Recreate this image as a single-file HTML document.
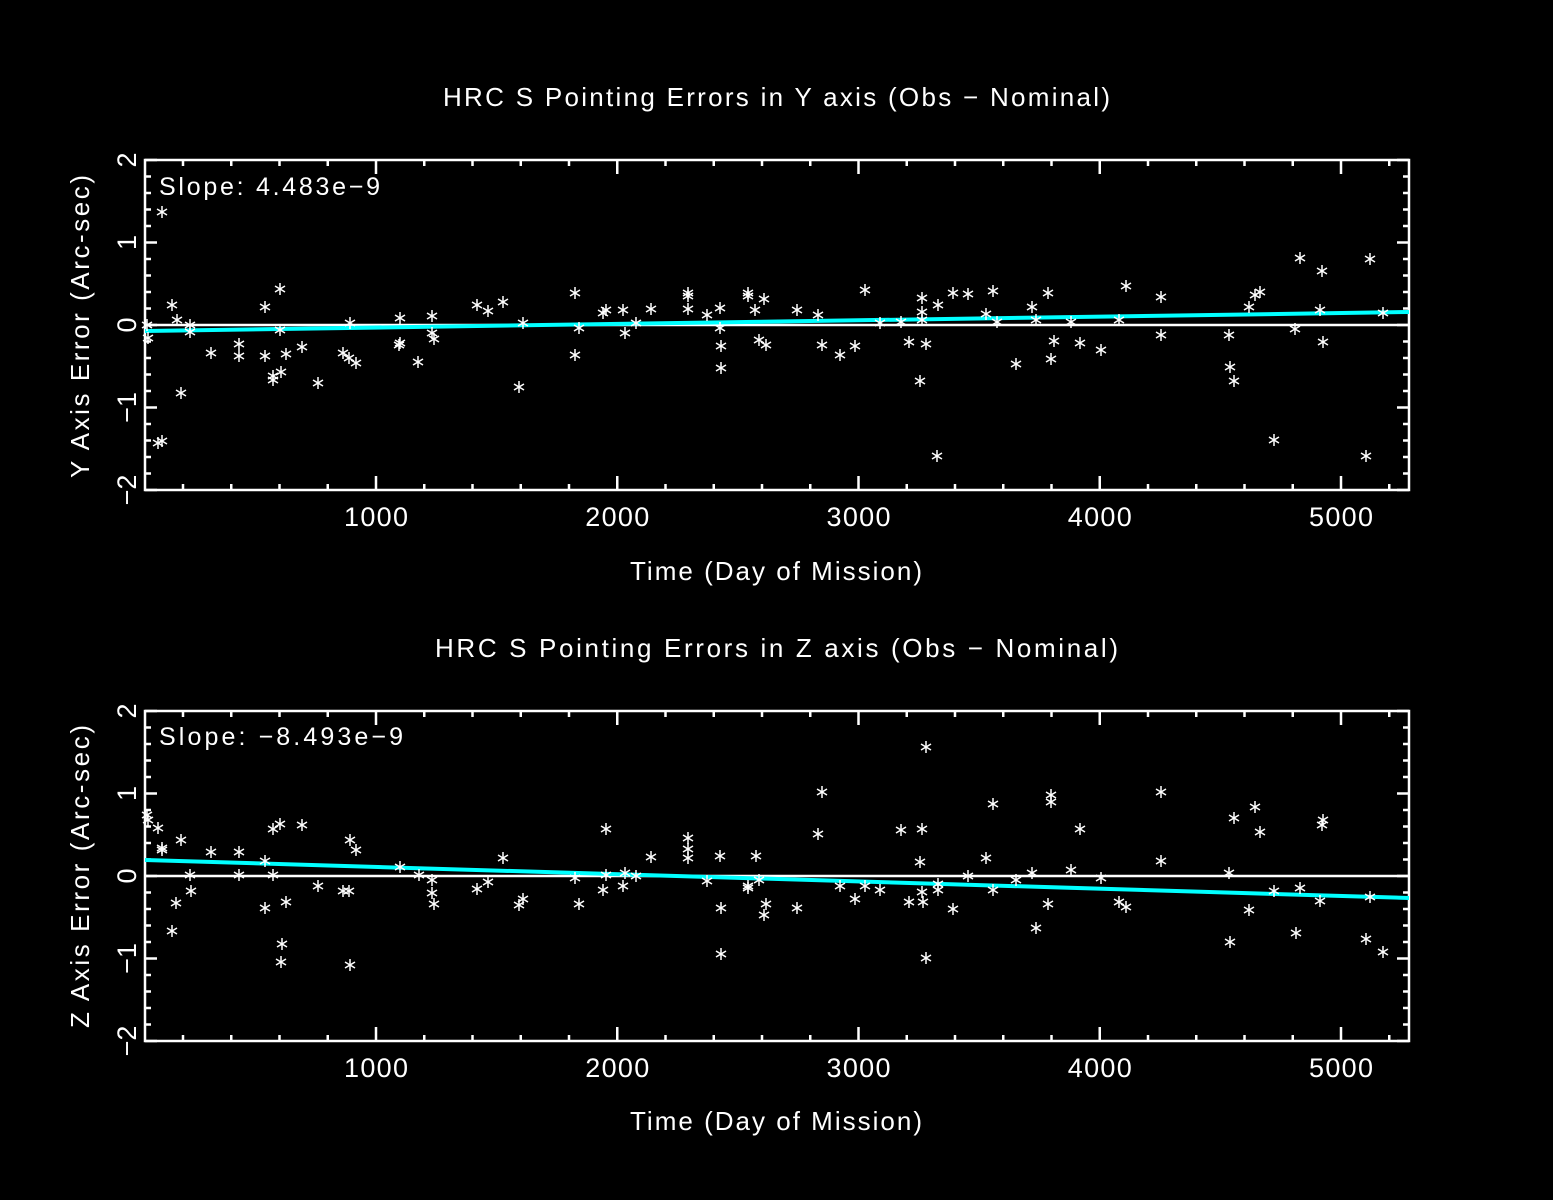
<!DOCTYPE html>
<html><head><meta charset="utf-8"><style>
html,body{margin:0;padding:0;background:#000;}
svg{display:block}
text{font-family:"Liberation Sans",sans-serif;fill:#fff}
</style></head><body>
<svg id="s" width="1553" height="1200" xmlns="http://www.w3.org/2000/svg">
<rect width="1553" height="1200" fill="#000"/>
<text x="443" y="106" font-size="26" textLength="667" lengthAdjust="spacing">HRC S Pointing Errors in Y axis (Obs − Nominal)</text>
<text x="435" y="657" font-size="26" textLength="683" lengthAdjust="spacing">HRC S Pointing Errors in  Z axis (Obs − Nominal)</text>
<text x="630" y="580" font-size="26" textLength="292" lengthAdjust="spacing">Time (Day of Mission)</text>
<text x="630" y="1130" font-size="26" textLength="292" lengthAdjust="spacing">Time (Day of Mission)</text>
<text transform="translate(89,478) rotate(-90)" font-size="26" textLength="303" lengthAdjust="spacing">Y Axis Error (Arc-sec)</text>
<text transform="translate(89,1028) rotate(-90)" font-size="26" textLength="303" lengthAdjust="spacing">Z Axis Error (Arc-sec)</text>
<text x="159" y="195" font-size="25" textLength="221" lengthAdjust="spacing">Slope:  4.483e−9</text>
<text x="159" y="745" font-size="25" textLength="244" lengthAdjust="spacing">Slope:  −8.493e−9</text>
<g id="g"></g>
</svg>
<script>
var g=document.getElementById('g'),h='';
function L(a,b,c,d,col,w){h+='<line x1="'+a+'" y1="'+b+'" x2="'+c+'" y2="'+d+'" stroke="'+(col||'#fff')+'" stroke-width="'+(w||2.5)+'"/>';}
function T(x,y,s,rot){h+=rot?'<text transform="translate('+x+','+y+') rotate(-90)" font-size="27" text-anchor="middle">'+s+'</text>':'<text x="'+x+'" y="'+y+'" font-size="27" text-anchor="middle" textLength="'+(s>=1000?64:0)+'" lengthAdjust="spacing">'+s+'</text>';}
function plot(top,bot,line,pts){
 var l=145,r=1409;
 h+='<rect x="'+l+'" y="'+top+'" width="'+(r-l)+'" height="'+(bot-top)+'" fill="none" stroke="#fff" stroke-width="2.5"/>';
 var zero=(top+bot)/2, u=(bot-top)/4;
 for(var d=200;d<=5200;d+=200){var x=134.75+d*0.24125;var big=d%1000==0;var len=big?14:6;L(x,top,x,top+len);L(x,bot,x,bot-len);if(big)T(x,bot+36,d);}
 for(var k=-10;k<=10;k++){var y=zero-k*u/5;var big=k%5==0;var len=big?12:6;L(l,y,l+len,y);L(r,y,r-len,y);if(big)T(136,y,k==0?'0':(k<0?'−':'')+Math.abs(k/5),true);}
 L(l,zero,r,zero,'#fff',2.5);
 L(l,line[0],r,line[1],'#00ffff',4);
 pts.forEach(function(p){var x=p[0],y=p[1];L(x,y-6,x,y+6,'#fff',1.5);L(x-5,y-3,x+5,y+3,'#fff',1.5);L(x-5,y+3,x+5,y-3,'#fff',1.5);});
}
plot(160,490,[331,312],[[147,325],[148,338],[162,212],[158,443],[162,441],[172,305],[177,320],[181,393],[190,325],[190,332],[211,353],[239,344],[239,356],[265,307],[265,356],[273,376],[273,380],[280,289],[280,330],[281,372],[286,354],[302,347],[318,383],[343,353],[349,358],[350,323],[356,363],[400,318],[400,343],[399,345],[418,362],[432,316],[432,333],[434,339],[477,305],[488,311],[503,302],[519,387],[523,323],[575,293],[575,355],[579,328],[603,313],[606,310],[623,310],[625,333],[636,323],[651,309],[688,293],[688,296],[688,309],[707,315],[720,308],[720,328],[721,346],[721,368],[748,293],[748,296],[755,310],[759,340],[764,299],[766,345],[797,310],[818,315],[822,345],[840,355],[855,346],[865,290],[880,323],[901,322],[909,342],[920,381],[922,298],[922,312],[922,320],[926,344],[937,456],[938,305],[953,293],[968,294],[986,314],[993,291],[997,322],[1016,364],[1032,307],[1036,320],[1048,293],[1051,359],[1054,341],[1071,322],[1080,343],[1101,350],[1119,320],[1126,286],[1161,297],[1161,335],[1229,335],[1230,367],[1234,381],[1249,307],[1255,295],[1260,292],[1274,440],[1295,329],[1300,258],[1320,310],[1322,271],[1323,342],[1366,456],[1370,259],[1383,313]]);
plot(711,1041,[860,898],[[147,815],[148,820],[158,828],[162,848],[162,850],[172,931],[176,903],[181,840],[190,875],[191,891],[211,852],[239,852],[239,875],[265,861],[265,908],[273,829],[273,875],[280,824],[282,944],[281,962],[286,902],[302,825],[318,886],[343,891],[349,891],[350,840],[356,850],[350,965],[400,867],[419,875],[432,880],[432,893],[434,904],[477,889],[488,882],[503,858],[519,905],[523,899],[575,878],[579,904],[603,890],[606,829],[606,875],[623,886],[625,873],[636,876],[651,857],[688,838],[688,849],[688,858],[707,881],[720,856],[721,908],[721,954],[748,886],[748,888],[756,856],[759,880],[764,915],[766,904],[797,908],[818,834],[822,792],[840,886],[855,899],[865,886],[880,890],[901,830],[909,902],[920,862],[922,829],[922,892],[923,902],[926,747],[926,958],[938,884],[938,890],[953,909],[968,876],[986,858],[993,804],[993,890],[1016,880],[1032,873],[1036,928],[1048,904],[1051,802],[1051,795],[1071,870],[1080,829],[1101,878],[1119,902],[1126,907],[1161,792],[1161,861],[1229,873],[1230,942],[1234,818],[1249,910],[1255,807],[1260,832],[1274,891],[1300,888],[1296,933],[1320,901],[1322,825],[1323,820],[1366,939],[1370,897],[1383,952]]);
g.innerHTML=h;
</script>
</body></html>
